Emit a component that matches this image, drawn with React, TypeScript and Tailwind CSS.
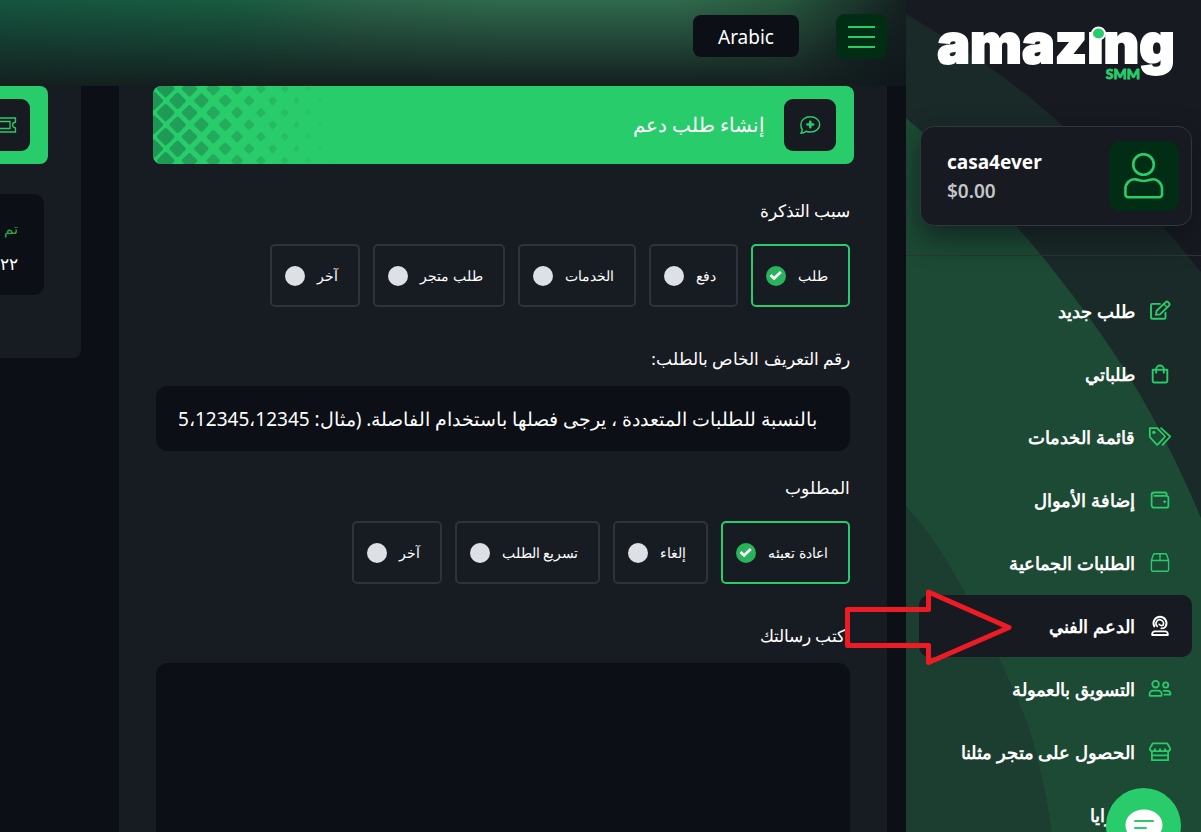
import type { ReactNode } from "react";

/* ---------- icons ---------- */

function Icon({ children, stroke = 1.8, className = "size-6" }: { children: ReactNode; stroke?: number; className?: string }) {
  return (
    <svg
      viewBox="0 0 24 24"
      className={className}
      fill="none"
      stroke="currentColor"
      strokeWidth={stroke}
      strokeLinecap="round"
      strokeLinejoin="round"
      aria-hidden="true"
    >
      {children}
    </svg>
  );
}

const EditIcon = () => (
  <Icon stroke={1.9}>
    <path d="M12 4.9H4.3A1.3 1.3 0 0 0 3 6.200v12.200a1.300 1.300 0 0 0 1.300 1.300h11.900a1.300 1.300 0 0 0 1.300-1.300v-4.600" />
    <path d="M8 15.900l.5-3.900 9.200-8.900a1.700 1.700 0 0 1 2.400 0l1 1a1.700 1.700 0 0 1 0 2.400L12 15.400z" />
    <path d="M15.800 5l3.400 3.300" strokeWidth="1.400" />
  </Icon>
);

const BagIcon = () => (
  <Icon stroke={1.9}>
    <path d="M4.700 7.700h14.600v11a1.800 1.800 0 0 1-1.800 1.800h-11a1.800 1.800 0 0 1-1.800-1.800z" />
    <path d="M8.200 10.800V7.300a3.800 3.800 0 0 1 7.600 0v3.500" />
  </Icon>
);

const TagsIcon = () => (
  <Icon stroke={1.800}>
    <path d="M1.800 3.200h7.400l8 8.300-7.300 7.900a1 1 0 0 1-1.400 0L1.800 12z" />
    <path d="M13 3.200l9.200 8.300-7.600 8.300" />
    <circle cx="5.800" cy="7.400" r="1.300" fill="currentColor" strokeWidth="0.800" />
  </Icon>
);

const WalletIcon = () => (
  <Icon stroke={1.800}>
    <path d="M18.600 7.700V6.300a1.800 1.800 0 0 0-1.800-1.800H6a2.400 2.400 0 0 0-2.400 2.400v10.400a2.400 2.400 0 0 0 2.400 2.400h12.400a2 2 0 0 0 2-2V9.800a2 2 0 0 0-2-2H6.200" />
    <circle cx="16.600" cy="13.700" r="1" fill="currentColor" strokeWidth="0.800" />
  </Icon>
);

const BoxIcon = () => (
  <Icon stroke={1.400}>
    <path d="M3.400 9.500h17.200v9.200a1.500 1.500 0 0 1-1.500 1.500H4.900a1.500 1.500 0 0 1-1.500-1.500zM3.400 9.500l1.900-5.800a1.600 1.600 0 0 1 1.500-1h10.400a1.600 1.600 0 0 1 1.500 1l1.900 5.800M12 2.700v6.800" />
  </Icon>
);

const SupportIcon = () => (
  <Icon stroke={1.900}>
    <path d="M6.300 12.400a6.500 6.500 0 1 1 11.400 0c-.9 1.500-2.500 2-4.300 2" />
    <path d="M9.300 12.300a3.700 3.700 0 1 1 5.800-1.200" strokeWidth="1.600" />
    <path d="M11 10.200c1 1.600 2.200 1.700 3.800 1.200" strokeWidth="1.500" />
    <path d="M4.200 21v-1a2.600 2.600 0 0 1 2.600-2.600h10.400a2.600 2.600 0 0 1 2.600 2.600v1z" />
  </Icon>
);

const UsersIcon = () => (
  <Icon stroke={1.800}>
    <circle cx="7.600" cy="7.200" r="3.300" />
    <circle cx="17.700" cy="8" r="2.600" />
    <path d="M1.600 18.300v-1.200a3.400 3.400 0 0 1 3.400-3.400h5.200a3.400 3.400 0 0 1 3.400 3.400v1.200a.6.6 0 0 1-.6.6H2.200a.6.6 0 0 1-.6-.6z" />
    <path d="M15.600 13.900h3.800a3 3 0 0 1 3 3v.7h-6" />
  </Icon>
);

const StoreIcon = () => (
  <Icon stroke={1.800}>
    <path d="M5.200 3.400h13.600a1 1 0 0 1 .9.6l2.500 4.600c0 1.600-1.200 2.700-2.600 2.700s-2.500-1-2.500-2.100c0 1.100-1.100 2.100-2.500 2.100S12 10.300 12 9.200c0 1.100-1.200 2.100-2.600 2.100S6.900 10.300 6.900 9.200c0 1.100-1.100 2.100-2.500 2.100S1.800 10.200 1.800 8.600L4.300 4a1 1 0 0 1 .9-.6z" />
    <path d="M3.900 11.300v8.900h16.200v-8.900M3.900 15.300h16.200" />
  </Icon>
);

const UserIcon = () => (
  <svg viewBox="0 0 40 46" className="h-[46px] w-10" fill="none" stroke="currentColor" strokeWidth="2.600" strokeLinejoin="round" aria-hidden="true">
    <circle cx="19.500" cy="11.500" r="10.300" />
    <path d="M1.400 41.500v-5.500c0-5.500 4.800-10.600 10.300-9.600 3 .6 4.800 1.600 8 1.600s5-1 8-1.600c5.500-1 10.300 4.100 10.300 9.600v5.500a2.700 2.700 0 0 1-2.700 2.700H4.100a2.700 2.700 0 0 1-2.700-2.700z" />
  </svg>
);

const ChatPlusIcon = () => (
  <Icon stroke={1.500}>
    <path d="M12.300 3.800c5.300 0 9.400 3.300 9.400 7.600s-4.100 7.600-9.400 7.600c-1.500 0-2.900-.3-4.200-.8-1.100 1-2.900 2-5.300 2 1-1 1.400-2.400 1.400-3.700-.9-1.400-1.300-3.200-1.300-5.100 0-4.300 4.100-7.600 9.400-7.600z" />
    <path d="M12.300 8.700v5.600M9.500 11.500h5.600" strokeWidth="2.600" />
  </Icon>
);

const TicketIcon = () => (
  <svg viewBox="0 0 26 16" className="h-4 w-[26px]" fill="none" stroke="currentColor" strokeWidth="1.300" aria-hidden="true">
    <path d="M1 1h23.500v4c-4 1-4 5 0 6v4H1v-4c4-1 4-5 0-6z" />
    <path d="M6.500 4.500h12.500v7h-12.500z" />
  </svg>
);

/* ---------- sidebar ---------- */

const menu = [
  { label: "طلب جديد", icon: <EditIcon /> },
  { label: "طلباتي", icon: <BagIcon /> },
  { label: "قائمة الخدمات", icon: <TagsIcon /> },
  { label: "إضافة الأموال", icon: <WalletIcon /> },
  { label: "الطلبات الجماعية", icon: <BoxIcon /> },
  { label: "الدعم الفني", icon: <SupportIcon />, active: true },
  { label: "التسويق بالعمولة", icon: <UsersIcon /> },
  { label: "الحصول على متجر مثلنا", icon: <StoreIcon /> },
  { label: "المزايا", icon: <span className="block size-6" /> },
];

function Logo() {
  return (
    <svg viewBox="0 0 256 64" className="h-16 w-64 overflow-visible" role="img" aria-label="amazing SMM">
      <text x="128" y="43" direction="ltr" textAnchor="middle" fontFamily="Inter, sans-serif" fontWeight="900" fontSize="55" fill="#fff" stroke="#fff" strokeWidth="1.800">
        amazıng
      </text>
      <ellipse cx="170.500" cy="13.500" rx="6.500" ry="6" fill="#29cc6a" stroke="#fff" strokeWidth="2" />
      <text x="195" y="59" direction="ltr" textAnchor="middle" fontFamily="Lato, sans-serif" fontWeight="900" fontSize="14" fill="#29cc6a" stroke="#29cc6a" strokeWidth=".8">
        SMM
      </text>
    </svg>
  );
}

function SidebarBackdrop() {
  return (
    <svg className="absolute inset-y-0 left-0 h-[832px] w-[295px]" viewBox="0 0 295 832" preserveAspectRatio="none" aria-hidden="true">
      <path d="M0 14C30 32 60 50 83 67C113 88 136 107 157 126C195 160 227 193 257 226L295 272V832H0z" fill="#1a2a28" />
      <path d="M0 118L15 131C50 160 82 193 110 226C126 244 137 257 147 270C177 308 204 345 227 383C252 424 274 468 295 518V832H0z" fill="#1c4a34" />
      <path d="M0 506C18 526 33 547 46 570C64 600 79 629 92 656C106 685 117 711 126 737C134 766 141 799 146 832H0z" fill="#1c3e30" />
    </svg>
  );
}

function Sidebar() {
  return (
    <aside className="relative flex w-[295px] shrink-0 flex-col overflow-hidden bg-[#171a21] text-white">
      <SidebarBackdrop />
      <div className="relative border-b border-[#2c3538] pr-[9px] pb-[29px] pl-[14px]">
        <div className="flex h-[126px] justify-center pt-5">
          <Logo />
        </div>
        <div className="flex h-[100px] items-center gap-4 rounded-[14px] border border-[#32363e] bg-[#171a21] pr-3 pl-[26px] shadow-[0_12px_28px_rgba(12,15,22,0.6)]">
          <span className="flex size-[70px] items-center justify-center rounded-xl bg-[#002d13] text-[#29cc6a]">
            <UserIcon />
          </span>
          <div dir="ltr" className="flex-1 pt-0.5 text-left text-[19px] leading-[29px]">
            <p className="font-bold">casa4ever</p>
            <p className="font-semibold text-[#c3c5c8]">$0.00</p>
          </div>
        </div>
      </div>
      <nav className="relative flex flex-col gap-px pt-6 pr-[9px] pl-[13px]">
        {menu.map((item) => (
          <a
            key={item.label}
            href="#"
            aria-current={item.active ? "page" : undefined}
            className={
              item.active
                ? "flex h-[62px] items-center gap-[13px] rounded-[10px] bg-[#171a21] px-5 text-lg font-semibold"
                : "flex h-[62px] items-center gap-[13px] rounded-[10px] px-5 text-lg font-semibold"
            }
          >
            <span className={item.active ? "text-white" : "text-[#29cc6a]"}>{item.icon}</span>
            {item.label}
          </a>
        ))}
      </nav>
    </aside>
  );
}

/* ---------- main area ---------- */

const diamonds = Array.from({ length: 7 }, (_, row) =>
  Array.from({ length: 8 }, (_, col) => {
    const x = (row % 2 === 0 ? 12.7 : 0.8) + col * 23.8;
    const y = 2.7 + row * 12;
    const size = Math.max((9.5 - x * 0.043) * 1.5, 0.8);
    return { x, y, size, alpha: Math.max(0.95 * (1 - x / 185), 0.03) };
  }),
).flat();

function DiamondPattern() {
  return (
    <svg viewBox="0 0 200 78" className="absolute top-0 left-0 h-[78px] w-[200px]" aria-hidden="true">
      {diamonds.map((d, i) => (
        <rect
          key={i}
          x={d.x - d.size / 2}
          y={d.y - d.size / 2}
          width={d.size}
          height={d.size}
          rx={d.size / 7}
          fill="#1f9453"
          opacity={d.alpha}
          transform={`rotate(45 ${d.x} ${d.y})`}
        />
      ))}
    </svg>
  );
}

function Banner({ icon, title, pattern }: { icon: ReactNode; title?: string; pattern?: boolean }) {
  return (
    <div className="relative flex h-[78px] items-center gap-[19px] overflow-hidden rounded-lg bg-[#29cc6a] px-[18px]">
      {pattern && <DiamondPattern />}
      <span className="flex size-[52px] shrink-0 items-center justify-center rounded-[9px] bg-[#171a21] text-[#29cc6a]">{icon}</span>
      {title && <h1 className="text-xl text-white">{title}</h1>}
    </div>
  );
}

function Options({ id, title, options }: { id: string; title: string; options: string[] }) {
  return (
    <div role="radiogroup" aria-labelledby={id} className="mb-[38px]">
      <p id={id} className="mb-[19px] text-[17px] leading-7">
        {title}
      </p>
      <div className="flex flex-wrap gap-[13px]">
        {options.map((option, i) => (
          <label
            key={option}
            className="flex h-[63px] items-center gap-3 rounded-[5px] border-2 border-[#2e323a] pr-5 pl-[13px] text-sm has-checked:border-[#29cc6a]"
          >
            {option}
            <span className="grid size-5">
              <input
                type="radio"
                name={id}
                defaultChecked={i === 0}
                className="peer col-start-1 row-start-1 size-5 appearance-none rounded-full bg-[#dde0e5] checked:bg-[#28b35c]"
              />
              <svg
                viewBox="0 0 20 20"
                className="pointer-events-none col-start-1 row-start-1 hidden size-5 peer-checked:block"
                fill="none"
                stroke="#fff"
                strokeWidth="2.800"
                aria-hidden="true"
              >
                <path d="M4.500 9l3.600 3.400L14.800 6" />
              </svg>
            </span>
          </label>
        ))}
      </div>
    </div>
  );
}

function TopBar() {
  return (
    <header className="flex h-[86px] shrink-0 items-start gap-[37px] bg-[radial-gradient(ellipse_110px_90px_at_100%_100%,#10171b,transparent),linear-gradient(to_bottom,transparent,rgba(20,31,33,0.5)_50%,#14201f_98%),linear-gradient(to_right,#15553f,#185c40_26%,#2a6248_40%,#2f694c_55%,#2f694c_75%,#28593f_86%,#14201f)] pt-[14px] pr-[19px]">
      <button
        type="button"
        aria-label="القائمة"
        className="flex h-[45px] w-[51px] flex-col items-center justify-center gap-2 rounded-[9px] bg-[#002d13]"
      >
        <span className="h-0.5 w-[27px] bg-[#29cc6a]" />
        <span className="h-0.5 w-[27px] bg-[#29cc6a]" />
        <span className="h-0.5 w-[27px] bg-[#29cc6a]" />
      </button>
      <button type="button" className="mt-px h-[42px] rounded-lg bg-[#0c0f16] px-[25px] pt-0.5 text-[19px] text-white">
        Arabic
      </button>
    </header>
  );
}

function TicketForm() {
  return (
    <section className="min-w-0 flex-1 bg-[#171b22] pr-[33px] pl-[34px]">
      <Banner icon={<ChatPlusIcon />} title="إنشاء طلب دعم" pattern />
      <form className="pt-[33px] pr-1 pl-[3px] text-white">
        <Options id="reason" title="سبب التذكرة" options={["طلب", "دفع", "الخدمات", "طلب متجر", "آخر"]} />
        <label htmlFor="order" className="mb-[13px] block text-[17px] leading-7">
          رقم التعريف الخاص بالطلب:
        </label>
        <input
          id="order"
          type="text"
          placeholder="بالنسبة للطلبات المتعددة ، يرجى فصلها باستخدام الفاصلة. (مثال: 12345،12345،12345)"
          className="mb-[23px] block h-[65px] w-full rounded-xl bg-[#0c0f16] pr-[33px] pl-[23px] text-[19px] text-white placeholder:text-white"
        />
        <Options id="request" title="المطلوب" options={["اعادة تعبئه", "إلغاء", "تسريع الطلب", "آخر"]} />
        <label htmlFor="message" className="mb-[13px] block text-[17px] leading-7">
          اكتب رسالتك
        </label>
        <textarea id="message" className="block h-60 w-full resize-none rounded-xl bg-[#0c0f16] px-8 py-5 text-[19px] text-white" />
      </form>
    </section>
  );
}

function TicketHistory() {
  return (
    <section className="w-[81px] shrink-0 self-start overflow-hidden rounded-br-lg bg-[#171b22] pr-[33px] pb-[63px]">
      <div className="w-64">
        <Banner icon={<TicketIcon />} />
      </div>
      <div className="mt-[30px] mr-1 h-[101px] w-64 rounded-[10px] bg-[#0c0f16] pt-[18px] pr-[26px] text-white">
        <p className="text-[15px] leading-8 text-[#28a745]">تم</p>
        <p className="text-[17px] leading-10">٢٠٢٢</p>
      </div>
    </section>
  );
}

export default function App() {
  return (
    <div dir="rtl" className="relative flex h-screen overflow-hidden bg-[#0c0f16] font-['Noto_Sans',sans-serif]">
      <Sidebar />
      <div className="flex min-w-0 flex-1 flex-col">
        <TopBar />
        <main className="flex min-h-0 flex-1 gap-[38px] overflow-hidden pr-[19px]">
          <TicketForm />
          <TicketHistory />
        </main>
      </div>
      <svg viewBox="0 0 170 80" className="pointer-events-none absolute top-[587px] right-[187px] h-20 w-[170px]" fill="none" stroke="#ed1c24" strokeWidth="5" aria-hidden="true">
        <path d="M3.500 22.500h81V5L165 40.500L84.500 75.500v-17h-81z" strokeLinejoin="round" />
      </svg>
      <button type="button" aria-label="محادثة" className="absolute right-5 -bottom-[31px] flex size-[75px] items-center justify-center rounded-full bg-[#29cc6a]">
        <svg viewBox="0 0 38 34" className="h-[34px] w-[38px]" aria-hidden="true">
          <path d="M19 0.500c10.300 0 18.500 6.700 18.500 15.500S29.300 32 19 32c-2.500 0-5 .5-9 1.500l-3-5C2.500 25.500.5 21 .5 16 .5 7.200 8.700.5 19 .5z" fill="#fff" />
          <path d="M10 12h18M10 19h11" stroke="#29cc6a" strokeWidth="2" strokeLinecap="round" />
        </svg>
      </button>
    </div>
  );
}
